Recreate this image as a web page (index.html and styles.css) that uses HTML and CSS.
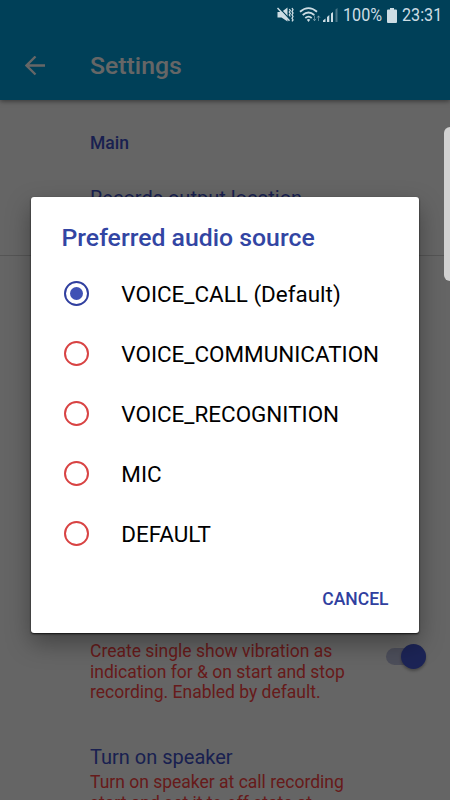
FILE: index.html
```html
<!DOCTYPE html>
<html lang="en">
<head>
    <meta charset="UTF-8">
    <meta name="viewport" content="width=device-width, initial-scale=1.0">
    <title>Settings</title>
    <link rel="stylesheet" href="styles.css">
</head>
<body>
    <div class="screen">
        <!-- App bar -->
        <header class="app-bar">
            <svg class="back-icon" viewBox="0 0 20 20">
                <path d="M20 9.500H1.500M10.500 0.500L1.500 9.500L10.500 18.500"/>
            </svg>
            <h1>Settings</h1>
        </header>

        <!-- Settings list -->
        <main class="settings">
            <section class="group">
                <h2>Main</h2>
                <h3>Records output location</h3>
            </section>

            <section class="group group-last">
                <div class="setting">
                    <p>Create single show vibration as<br>indication for &amp; on start and stop<br>recording. Enabled by default.</p>
                    <div class="switch"><span class="thumb"></span></div>
                </div>
                <div class="setting-text">
                    <h3>Turn on speaker</h3>
                    <p>Turn on speaker at call recording<br>start and set it to off state at</p>
                </div>
            </section>
        </main>
    </div>

    <div class="scrim">
        <!-- Dialog -->
        <div class="dialog">
            <h2 class="dialog-title">Preferred audio source</h2>
            <ul class="options">
                <li><span class="radio checked"></span><span class="label">VOICE_CALL (Default)</span></li>
                <li><span class="radio"></span><span class="label">VOICE_COMMUNICATION</span></li>
                <li><span class="radio"></span><span class="label">VOICE_RECOGNITION</span></li>
                <li><span class="radio"></span><span class="label">MIC</span></li>
                <li><span class="radio"></span><span class="label">DEFAULT</span></li>
            </ul>
            <div class="actions"><button>CANCEL</button></div>
        </div>
    </div>

    <!-- Status bar -->
    <div class="status-bar">
        <svg class="status-icons" width="62" height="18" viewBox="0 0 62 18">
            <!-- muted, vibrating speaker -->
            <path d="M0.500 6h4L10.500 1.500V15.500L4.500 11.500h-4z" fill="currentColor"/>
            <path d="M1.500 1.200L13 13.500" stroke="#004058" stroke-width="1.3"/>
            <path d="M0.500 2L12.500 14.800" stroke="currentColor" stroke-width="1.5"/>
            <path d="M12.300 3l1 1.500-1 1.500 1 1.500-1 1.500 1 1.500M15 2l1 1.700-1 1.700 1 1.700-1 1.700 1 1.700-1 1.700 1 1.700-1 1.500" fill="none" stroke="currentColor" stroke-width="1.3"/>
            <!-- wifi -->
            <path d="M23 5.800Q31.500-1.600 40 5.800M25.700 9q5.800-5 11.600 0M28.300 12q3.200-2.800 6.400 0" fill="none" stroke="currentColor" stroke-width="1.8"/>
            <path d="M29.800 13.800q1.700-1.400 3.400 0L31.500 16z" fill="currentColor"/>
            <path d="M37.500 9.500v5M36 12.800l1.500 2 1.500-2M41.500 15v-5M40 11.800l1.500-2 1.500 2" fill="none" stroke="currentColor" opacity=".45"/>
            <!-- signal -->
            <path d="M46 16v-1.500l2.500-2V16zM50 16v-5l2.300-2V16zM54 16V7.500L56 6v10z" fill="currentColor"/>
            <path d="M58.500 16V3.500L60.500 2v14z" fill="currentColor" opacity=".35"/>
        </svg>
        <span class="percent">100%</span>
        <svg class="battery" width="10" height="15" viewBox="0 0 10 15">
            <path d="M3 0h4v1.500h2q1 0 1 1V14q0 1-1 1H1q-1 0-1-1V2.500q0-1 1-1h2z" fill="currentColor"/>
        </svg>
        <span class="clock">23:31</span>
    </div>

    <div class="edge-panel"></div>
</body>
</html>
```

FILE: styles.css
```css
* {
    margin: 0;
    padding: 0;
    box-sizing: border-box;
    font-family: Roboto, sans-serif;
}

body {
    position: relative;
    width: 450px;
    height: 800px;
    overflow: hidden;
}

.screen {
    height: 800px;
    overflow: hidden;
    background: #fcfcfc;
}

.app-bar {
    display: flex;
    align-items: flex-end;
    position: relative;
    height: 100px;
    padding: 0 25px 24px;
    background: #00a0dc;
    color: #fff;
    box-shadow: 0 1px 5px rgba(0, 0, 0, 0.5);
}

.back-icon {
    width: 20px;
    height: 20px;
    fill: none;
    stroke: #fff;
    stroke-width: 2.3;
}

.app-bar h1 {
    margin-left: 45px;
    font-size: 24.8px;
    line-height: 20px;
    font-weight: 500;
}

.group {
    height: 156px;
    padding: 31px 22px 0 90px;
    border-bottom: 1px solid #d5d5d5;
}

.group h2 {
    font-size: 17.5px;
    line-height: 24px;
    font-weight: 500;
    color: #3f51c8;
}

h3 {
    font-size: 20px;
    line-height: 24px;
    font-weight: 400;
    color: #3f51c8;
}

.group h2 + h3 {
    margin-top: 31px;
}

.group-last {
    height: auto;
    padding-top: 385px;
}

.setting {
    display: flex;
    justify-content: space-between;
}

.group p {
    font-size: 17.5px;
    line-height: 20.5px;
    color: #ff4444;
    white-space: nowrap;
}

.setting-text {
    margin-top: 42px;
}

.setting-text p {
    margin-top: 3.5px;
}

.switch {
    display: flex;
    justify-content: flex-end;
    align-items: center;
    width: 40px;
    height: 17px;
    margin: 7px 2px 0 0;
    border-radius: 9px;
    background: #bfc2e0;
}

.thumb {
    width: 25px;
    height: 25px;
    border-radius: 50%;
    background: #465ad8;
    box-shadow: 0 2px 3px rgba(0, 0, 0, 0.3);
    flex-shrink: 0;
}

.scrim {
    position: absolute;
    inset: 0;
    padding: 196.5px 31.5px 0 31px;
    background: rgba(0, 0, 0, 0.6);
}

.dialog {
    height: 436.5px;
    padding: 26px 30px 0;
    border-radius: 3px;
    background: #fff;
    box-shadow: 0 1px 2px rgba(0, 0, 0, 0.8), 0 10px 24px rgba(0, 0, 0, 0.35);
}

.dialog-title {
    padding-left: 0.5px;
    font-size: 24.8px;
    line-height: 30px;
    font-weight: 500;
    color: #3245a3;
}

.options {
    margin-top: 10.5px;
    list-style: none;
}

.options li {
    display: flex;
    align-items: center;
    height: 60px;
    padding-left: 2.5px;
}

.radio {
    display: flex;
    align-items: center;
    justify-content: center;
    width: 25px;
    height: 25px;
    border: 2.5px solid #d84343;
    border-radius: 50%;
    flex-shrink: 0;
}

.radio.checked {
    border-color: #303f9f;
}

.radio.checked::after {
    content: "";
    width: 13px;
    height: 13px;
    border-radius: 50%;
    background: #3f51b5;
}

.label {
    margin-left: 32.8px;
    padding-top: 1px;
    font-size: 22.45px;
    white-space: nowrap;
    color: #000;
}

.actions {
    display: flex;
    justify-content: flex-end;
    margin-top: 23px;
}

.actions button {
    border: none;
    background: none;
    font-size: 17.5px;
    line-height: 26px;
    font-weight: 500;
    color: #303f9f;
}

.status-bar {
    position: absolute;
    top: 0;
    right: 7px;
    display: flex;
    align-items: center;
    height: 30px;
    color: #cddde4;
    font-size: 18.8px;
}

/* the status bar digits are slightly condensed */
.percent, .clock {
    transform: scaleX(0.86);
    transform-origin: left center;
}

.percent {
    width: 44px;
    margin-left: 4px;
}

.battery {
    margin: 0 5px 0 0;
}

.clock {
    width: 41px;
}

/* edge panel handle */
.edge-panel {
    position: absolute;
    top: 127px;
    right: 0;
    width: 6px;
    height: 154px;
    border-radius: 6px 0 0 6px;
    background: #d2d2d2;
}
```
